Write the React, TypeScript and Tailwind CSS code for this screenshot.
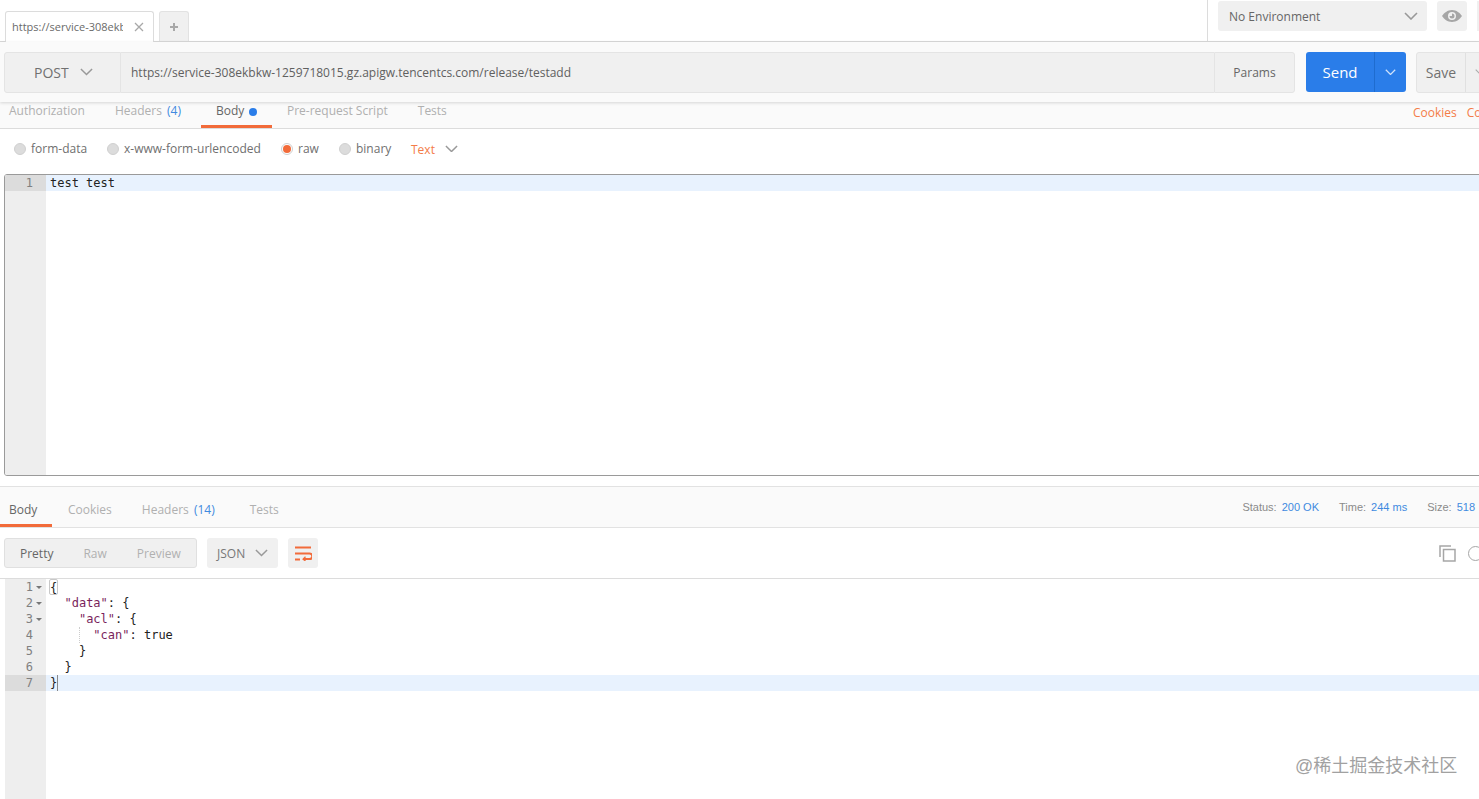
import React from "react";

const Chevron = ({ className = "", w = 14 }: { className?: string; w?: number }) => (
  <svg width={w} height={w * 0.6} viewBox="0 0 14 8.4" fill="none" className={`shrink-0 ${className}`}>
    <path d="M1 1l6 6 6-6" stroke="currentColor" strokeWidth="1.6" />
  </svg>
);

const Radio = ({ label, on = false, w }: { label: string; on?: boolean; w: string }) => (
  <div className={`flex items-center gap-[5px] shrink-0 ${w}`}>
    <span className={`w-[12px] h-[12px] rounded-full border flex items-center justify-center ${on ? "border-[#cfcfcf] bg-white" : "border-[#d0d0d0] bg-[#dcdcdc]"}`}>
      {on && <span className="w-[8px] h-[8px] rounded-full bg-[#f26b3a]" />}
    </span>
    <span className="text-[12px] text-[#6f6f6f]">{label}</span>
  </div>
);

const Fold = () => (
  <span className="ml-[3px] w-0 h-0 border-x-[3px] border-x-transparent border-t-[3px] border-t-[#777]" />
);

const Gutter = ({ n, fold, active }: { n: number; fold?: boolean; active?: boolean }) => (
  <div className={`h-[16px] flex items-center ${active ? "bg-[#dcdcdc]" : ""}`}>
    <span className="w-[28px] text-right text-[#808080]">{n}</span>
    {fold && <Fold />}
  </div>
);

const P = "text-[#7a1f5c]";

export default function App() {
  return (
    <div className="relative w-[1479px] h-[799px] overflow-hidden bg-white font-['Open_Sans','Noto_Sans',sans-serif] flex flex-col">
      {/* tab bar */}
      <div className="h-[42px] shrink-0 border-b border-[#d9d9d9] flex">
        <div className="flex-1 flex items-end pl-[5px] gap-[5px]">
          <div className="w-[149px] h-[31px] -mb-px bg-white border border-b-0 border-[#dcdcdc] rounded-t-[3px] flex items-center pl-[6px] relative z-10">
            <span className="w-[111px] overflow-hidden whitespace-nowrap text-[11px] text-[#6a6a6a]">https://service-308ekbkw</span>
            <svg width="10" height="10" viewBox="0 0 10 10" className="ml-[11px] text-[#a8a8a8]">
              <path d="M1 1l8 8M9 1l-8 8" stroke="currentColor" strokeWidth="1.3" />
            </svg>
          </div>
          <div className="w-[30px] h-[30px] bg-[#f0f0f0] border border-b-0 border-[#e2e2e2] rounded-t-[3px] flex items-center justify-center">
            <svg width="10" height="10" viewBox="0 0 10 10" className="text-[#a8a8a8]">
              <path d="M5 1v8M1 5h8" stroke="currentColor" strokeWidth="2" />
            </svg>
          </div>
        </div>
        <div className="w-[272px] border-l border-[#dcdcdc] flex pl-[10px] pt-px">
          <div className="w-[210px] h-[30px] bg-[#f0f0f0] rounded-[3px] flex items-center justify-between pl-[11px] pr-[9px]">
            <span className="text-[12px] text-[#666] mt-px">No Environment</span>
            <Chevron className="text-[#999]" />
          </div>
          <div className="ml-[10px] w-[30px] h-[30px] bg-[#f0f0f0] rounded-[3px] flex items-center justify-center">
            <svg width="20" height="12" viewBox="0 0 20 12" className="text-[#a6a6a6]">
              <path fillRule="evenodd" fill="currentColor" d="M10 0c4.500 0 8 3 10 6-2 3-5.500 6-10 6S2 9 0 6c2-3 5.500-6 10-6zm0 2a4 4 0 1 0 0 8 4 4 0 0 0 0-8zm0 1.500a2.500 2.500 0 1 1-2.500 2.500H10z" />
            </svg>
          </div>
          <div className="ml-[10px] w-[2px] h-[30px] bg-[#f0f0f0]" />
        </div>
      </div>

      {/* url bar */}
      <div className="h-[60px] shrink-0 bg-[#fafafa] shadow-[0_1px_3px_rgba(0,0,0,0.15)] relative z-10 flex items-center pl-[4px] whitespace-nowrap">
        <div className="w-[117px] shrink-0 h-[41px] bg-[#f0f0f0] border border-[#e4e4e4] rounded-l-[3px] flex items-center pl-[29px] gap-[11px]">
          <span className="text-[14px] text-[#707070]">POST</span>
          <Chevron className="text-[#999]" w={13} />
        </div>
        <div className="w-[1093px] shrink-0 h-[41px] bg-[#f0f0f0] border-y border-[#e4e4e4] flex items-center pl-[10px]">
          <span className="text-[12px] text-[#606060] mt-px">https://service-308ekbkw-1259718015.gz.apigw.tencentcs.com/release/testadd</span>
        </div>
        <div className="w-[81px] shrink-0 h-[41px] bg-[#f0f0f0] border border-[#e4e4e4] rounded-r-[3px] flex items-center justify-center">
          <span className="text-[12px] text-[#666] mt-px">Params</span>
        </div>
        <div className="ml-[11px] w-[100px] shrink-0 h-[40px] bg-[#2a7de9] rounded-[3px] flex">
          <div className="w-[69px] flex items-center justify-center border-r border-[#1e6ccf]">
            <span className="text-[15px] font-medium text-white">Send</span>
          </div>
          <div className="flex-1 flex items-center justify-center">
            <Chevron className="text-[#cfe2fb]" w={11} />
          </div>
        </div>
        <div className="ml-[10px] w-[80px] shrink-0 h-[41px] bg-[#f0f0f0] border border-[#e4e4e4] rounded-[3px] flex">
          <div className="w-[49px] flex items-center justify-center border-r border-[#e0e0e0]">
            <span className="text-[14px] font-medium text-[#707070]">Save</span>
          </div>
          <Chevron className="ml-[9px] mt-[16px] text-[#aaa]" w={10} />
        </div>
      </div>

      {/* request tabs */}
      <div className="h-[27px] shrink-0 bg-[#fafafa] border-b border-[#dcdcdc] flex justify-between text-[12px] text-[#b0b0b0] whitespace-nowrap">
        <div className="flex pl-[9px] leading-[18px]">
          <span>Authorization</span>
          <span className="ml-[30px]">Headers <span className="ml-[2px] text-[#3f8ae0]">(4)</span></span>
          <div className="ml-[20px] w-[71px] h-[26px] border-b-[3px] border-[#f26b3a] flex pl-[15px] gap-[5px] text-[#666]">
            <span>Body</span>
            <span className="mt-[6px] w-[8px] h-[8px] rounded-full bg-[#2a7de9]" />
          </div>
          <span className="ml-[15px]">Pre-request Script</span>
          <span className="ml-[30px]">Tests</span>
        </div>
        <div className="flex gap-[10px] pt-[2px] w-[66px] text-[#f47c48] leading-[18px]">
          <span>Cookies</span>
          <span>Code</span>
        </div>
      </div>

      {/* body type */}
      <div className="h-[45px] shrink-0 flex items-center pl-[14px] pb-[6px] whitespace-nowrap">
        <Radio label="form-data" w="w-[93px]" />
        <Radio label="x-www-form-urlencoded" w="w-[174px]" />
        <Radio label="raw" on w="w-[58px]" />
        <Radio label="binary" w="w-[72px]" />
        <span className="text-[12px] text-[#f47c48] mt-[3px]">Text</span>
        <Chevron className="ml-[10px] text-[#999]" w={13} />
      </div>

      {/* request editor */}
      <div className="ml-[4px] -mr-[4px] h-[302px] shrink-0 border border-[#9a9a9a] rounded-l-[3px] flex overflow-hidden font-['DejaVu_Sans_Mono',monospace] text-[12px] leading-[16px]">
        <div className="w-[41px] bg-[#eeeeee] shrink-0">
          <div className="h-[16px] bg-[#dcdcdc] pr-[13px] text-right text-[#808080]">1</div>
        </div>
        <div className="flex-1">
          <div className="h-[16px] bg-[#e8f2fe] pl-[4px] text-[#222]">test test</div>
        </div>
      </div>

      {/* response tabs */}
      <div className="mt-[10px] h-[42px] shrink-0 bg-[#fafafa] border-y border-[#e2e2e2] flex justify-between text-[12px] text-[#b0b0b0] whitespace-nowrap">
        <div className="flex">
          <div className="w-[52px] h-[40px] border-b-[3px] border-[#f26b3a] pl-[9px] pt-[14px] text-[#666] leading-[18px]">Body</div>
          <span className="ml-[16px] pt-[14px] leading-[18px]">Cookies</span>
          <span className="ml-[30px] pt-[14px] leading-[18px]">Headers <span className="ml-[2px] text-[#3f8ae0]">(14)</span></span>
          <span className="ml-[35px] pt-[14px] leading-[18px]">Tests</span>
        </div>
        <div className="flex pt-[12px] pr-[4px] font-['Liberation_Sans',sans-serif] text-[11px] leading-[16px] text-[#8a8a8a]">
          <span>Status:</span>
          <span className="ml-[5px] text-[#3f8ae0]">200 OK</span>
          <span className="ml-[20px]">Time:</span>
          <span className="ml-[5px] text-[#3f8ae0]">244 ms</span>
          <span className="ml-[20px]">Size:</span>
          <span className="ml-[5px] text-[#3f8ae0]">518</span>
        </div>
      </div>

      {/* response toolbar */}
      <div className="h-[51px] shrink-0 border-b border-[#dcdcdc] flex items-center pl-[4px] whitespace-nowrap">
        <div className="w-[193px] h-[30px] bg-[#f0f0f0] border border-[#e0e0e0] rounded-[3px] flex items-center text-[12px] text-[#b0b0b0]">
          <span className="ml-[15px] mt-px text-[#666]">Pretty</span>
          <span className="ml-[30px] mt-px">Raw</span>
          <span className="ml-[30px] mt-px">Preview</span>
        </div>
        <div className="ml-[10px] w-[71px] h-[30px] bg-[#f0f0f0] rounded-[3px] flex items-center pl-[10px]">
          <span className="text-[12px] text-[#777] mt-px">JSON</span>
          <Chevron className="ml-[10px] text-[#999]" w={13} />
        </div>
        <div className="ml-[10px] w-[30px] h-[30px] bg-[#f0f0f0] rounded-[3px] flex items-center justify-center">
          <svg width="18" height="15" viewBox="0 0 18 15" fill="none" stroke="#f26b3a" strokeWidth="2">
            <path d="M1 1.500h16M1 7.500h14.500a2.800 2.800 0 0 1 0 5.600H9.500M1 13.500h5" />
            <path d="M11.500 10.800l-2.400 2.300 2.400 1.900" strokeWidth="1.300" />
          </svg>
        </div>
        <div className="ml-auto flex items-center gap-[12px] -mr-[4px] shrink-0">
          <svg width="17" height="17" viewBox="0 0 17 17" fill="none" stroke="#a6a6a6" strokeWidth="1.500">
            <path d="M12 1H1v11" />
            <rect x="4.500" y="4.500" width="11.500" height="11.500" />
          </svg>
          <span className="w-[15px] h-[15px] rounded-full border-[1.5px] border-[#a6a6a6]" />
        </div>
      </div>

      {/* response code */}
      <div className="flex-1 flex pl-[5px] font-['DejaVu_Sans_Mono',monospace] text-[12px] leading-[16px] whitespace-pre">
        <div className="w-[41px] bg-[#eeeeee] shrink-0 -mr-[41px] relative z-10 h-full">
          <Gutter n={1} fold />
          <Gutter n={2} fold />
          <Gutter n={3} fold />
          <Gutter n={4} />
          <Gutter n={5} />
          <Gutter n={6} />
          <Gutter n={7} active />
        </div>
        <div className="flex-1 pl-[41px] text-[#222]">
          <div className="h-[16px] pl-[4px]"><span className="inline-block h-[16px] border border-[#c8c8c8] rounded-[2px] -ml-px">{"{"}</span></div>
          <div className="h-[16px] pl-[4px]">{"  "}<span className={P}>"data"</span>: {"{"}</div>
          <div className="h-[16px] pl-[4px]">{"    "}<span className={P}>"acl"</span>: {"{"}</div>
          <div className="h-[16px] pl-[4px] relative">{"      "}<span className={P}>"can"</span>: true<span className="absolute left-[33px] top-0 h-[16px] border-l border-dotted border-[#ccc]" /></div>
          <div className="h-[16px] pl-[4px]">{"    }"}</div>
          <div className="h-[16px] pl-[4px]">{"  }"}</div>
          <div className="h-[16px] pl-[4px] bg-[#e8f2fe]">{"}"}<span className="inline-block w-px h-[16px] bg-[#888] align-top" /></div>
        </div>
      </div>

      <div className="absolute left-[1295px] top-[754px] text-[18px] leading-[24px] text-[#8a8a8a] opacity-80 whitespace-nowrap font-['Liberation_Sans','Noto_Sans_CJK_SC',sans-serif]">
        @稀土掘金技术社区
      </div>
    </div>
  );
}
